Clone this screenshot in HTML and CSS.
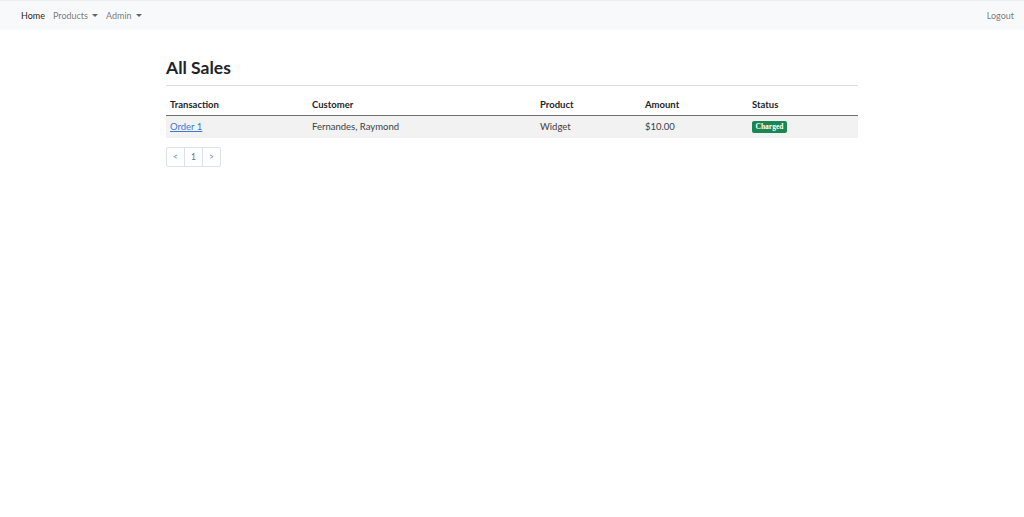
FILE: index.html
```html
<!DOCTYPE html>
<html lang="en">
<head>
<meta charset="utf-8">
<title>All Sales</title>
<link rel="stylesheet" href="styles.css">
</head>
<body>
<nav class="navbar">
  <ul class="nav-left">
    <li><a class="nav-link active" href="#">Home</a></li>
    <li><a class="nav-link dropdown" href="#">Products</a></li>
    <li><a class="nav-link dropdown" href="#">Admin</a></li>
  </ul>
  <ul class="nav-right">
    <li><a class="nav-link" href="#">Logout</a></li>
  </ul>
</nav>
<main class="container">
  <h1 class="title">All Sales</h1>
  <hr class="rule">
  <table class="sales">
    <colgroup>
      <col class="c1"><col class="c2"><col class="c3"><col class="c4"><col class="c5">
    </colgroup>
    <thead>
      <tr><th>Transaction</th><th>Customer</th><th>Product</th><th>Amount</th><th>Status</th></tr>
    </thead>
    <tbody>
      <tr>
        <td><a class="order" href="#">Order 1</a></td>
        <td>Fernandes, Raymond</td>
        <td>Widget</td>
        <td>$10.00</td>
        <td><span class="badge">Charged</span></td>
      </tr>
    </tbody>
  </table>
  <ul class="pagination">
    <li><a href="#">&lt;</a></li>
    <li><a href="#" class="cur">1</a></li>
    <li><a href="#">&gt;</a></li>
  </ul>
</main>
</body>
</html>
```
FILE: styles.css
```css
* { box-sizing: border-box; }
html, body { margin: 0; padding: 0; background: #fff; }
body {
  font-family: "Lato", "Open Sans", "Liberation Sans", sans-serif;
  font-size: 9.5px;
  line-height: 1.5;
  color: #212529;
}
a { text-decoration: none; }
ul { list-style: none; margin: 0; padding: 0; }

.navbar {
  display: flex;
  justify-content: space-between;
  align-items: center;
  height: 30px;
  background: #f8f9fa;
  border-top: 1px solid #eceef0;
  padding: 0 6px 0 17px;
}
.nav-left, .nav-right { display: flex; align-items: center; }
.nav-link {
  display: block;
  padding: 4px 4px;
  color: rgba(0,0,0,.55);
  font-size: 9px;
}
.nav-link.active { color: rgba(0,0,0,.9); }
.nav-link.dropdown::after {
  content: "";
  display: inline-block;
  margin-left: 4px;
  vertical-align: 2px;
  border-top: 3px solid rgba(0,0,0,.6);
  border-left: 3px solid transparent;
  border-right: 3px solid transparent;
}

.container {
  width: 692px;
  margin: 0 auto;
  padding-top: 27px;
}
.title {
  margin: 0;
  font-size: 17.5px;
  font-weight: 700;
  line-height: 1.2;
  color: #212529;
}
.rule {
  margin: 7px 0 8px;
  border: 0;
  border-top: 1px solid #dcdee0;
}
.sales {
  width: 100%;
  border-collapse: collapse;
  font-size: 9.5px;
}
.c1 { width: 142px; }
.c2 { width: 228px; }
.c3 { width: 105px; }
.c4 { width: 107px; }
.sales th {
  text-align: left;
  font-weight: 700;
  padding: 4px 4px;
  height: 21px;
  line-height: 13px;
  border-bottom: 1px solid #6c6e70;
}
.sales td {
  padding: 4px 4px;
  height: 22px;
  line-height: 14px;
  background: #f2f2f2;
  color: #3c3f42;
}
.order { color: #3b78d8; text-decoration: underline; }
.badge {
  display: inline-block;
  background: #198754;
  color: #fff;
  font-family: "Liberation Serif", "DejaVu Serif", serif;
  font-weight: 700;
  font-size: 7.5px;
  line-height: 1;
  padding: 2px 3.5px 2.5px;
  border-radius: 2px;
  vertical-align: 1px;
}
.pagination {
  display: flex;
  margin-top: 9px;
}
.pagination a {
  display: block;
  width: 19px;
  height: 20px;
  line-height: 18px;
  text-align: center;
  border: 1px solid #dee2e6;
  margin-left: -1px;
  color: #5b8ad8;
  font-size: 8.5px;
}
.pagination li:first-child a { margin-left: 0; border-radius: 2px 0 0 2px; }
.pagination li:last-child a { border-radius: 0 2px 2px 0; }
.pagination a.cur { color: #5a6f8a; }
```
